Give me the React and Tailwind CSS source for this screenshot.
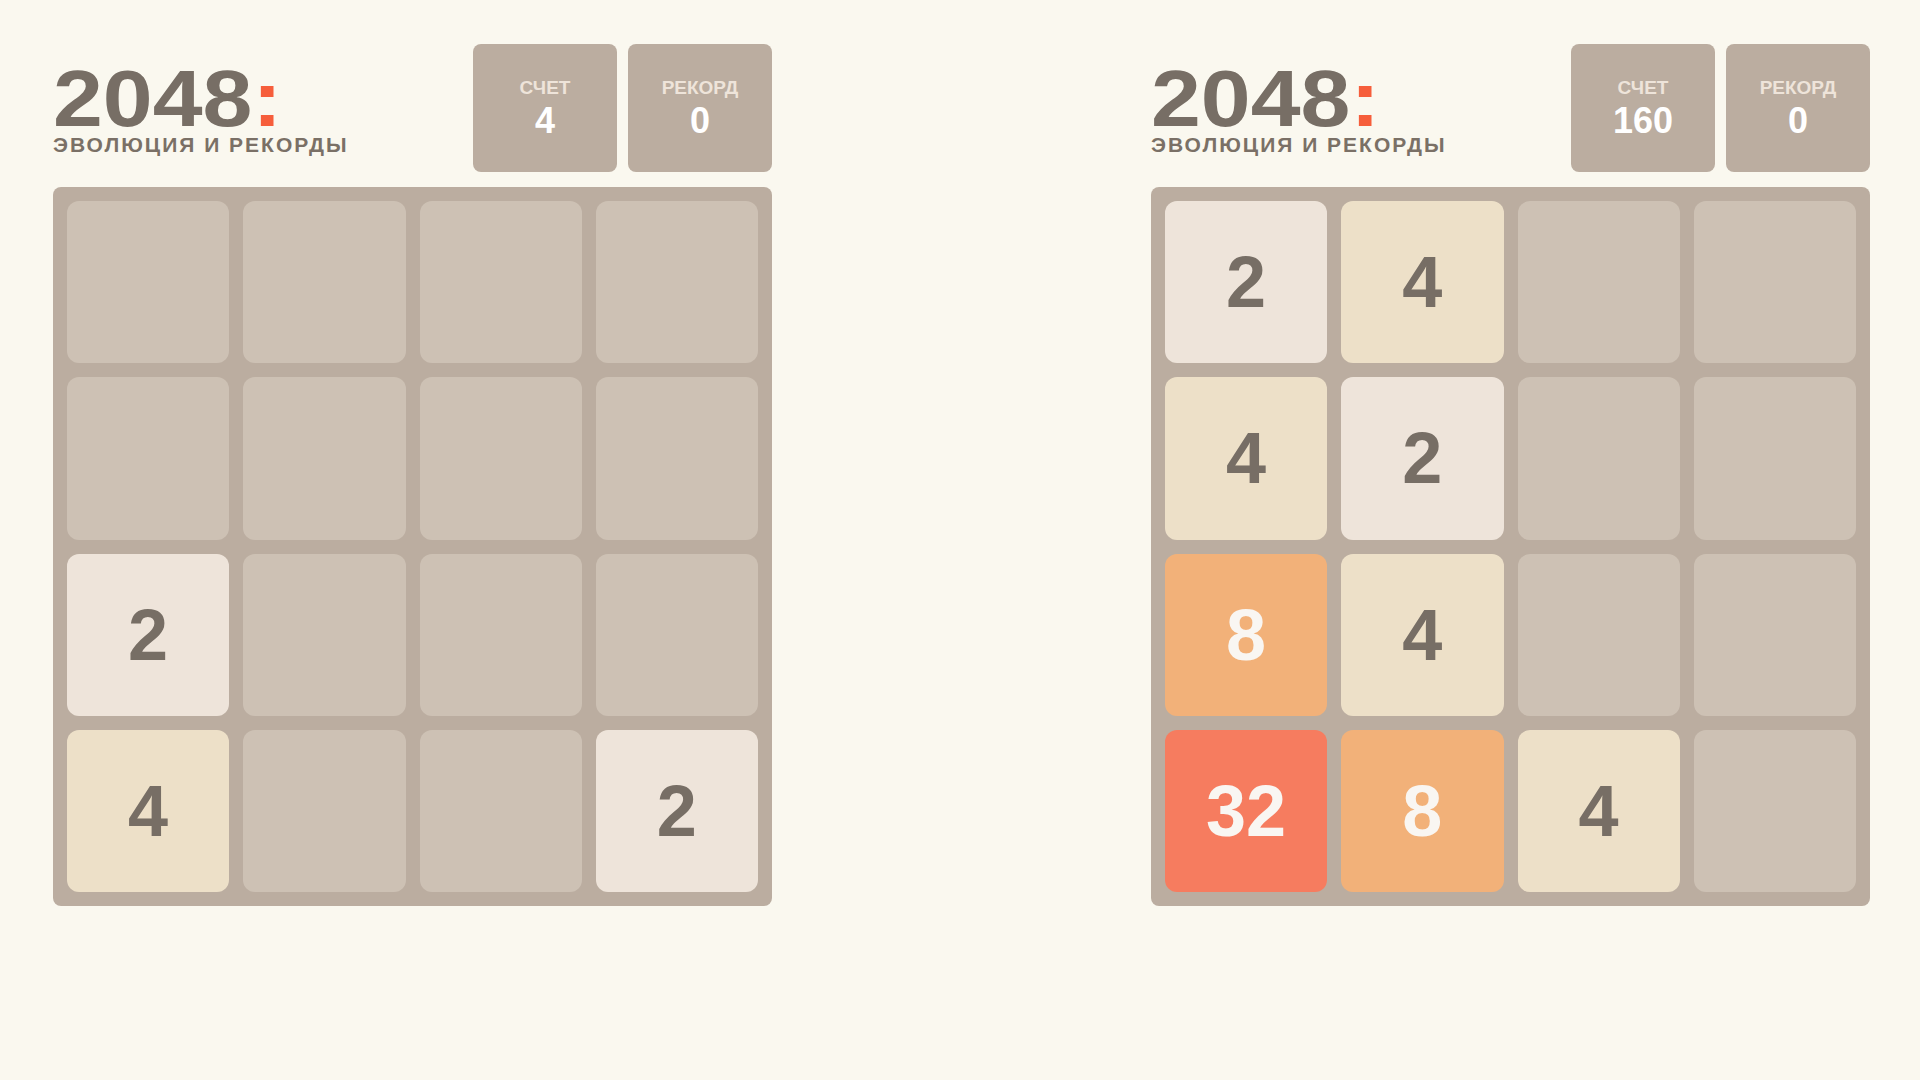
import React from "react";

const tileStyles = {
  0: "bg-[#cdc1b4]",
  2: "bg-[#eee4da] text-[#776e65]",
  4: "bg-[#ede0c8] text-[#776e65]",
  8: "bg-[#f2b179] text-[#f9f6f2]",
  16: "bg-[#f59563] text-[#f9f6f2]",
  32: "bg-[#f67c5f] text-[#f9f6f2]",
};

const games = [
  {
    score: 4,
    best: 0,
    grid: [
      [0, 0, 0, 0],
      [0, 0, 0, 0],
      [2, 0, 0, 0],
      [4, 0, 0, 2],
    ],
  },
  {
    score: 160,
    best: 0,
    grid: [
      [2, 4, 0, 0],
      [4, 2, 0, 0],
      [8, 4, 0, 0],
      [32, 8, 4, 0],
    ],
  },
];

function ScoreBox({ label, value }) {
  return (
    <div className="w-[144px] h-[128px] rounded-[8px] bg-[#bbada0] flex flex-col items-center pt-[34px]">
      <div className="text-[19px] leading-none font-bold text-[#eee4da]">
        {label}
      </div>
      <div className="mt-[6px] text-[36px] leading-none font-bold text-white">
        {value}
      </div>
    </div>
  );
}

function Game({ game }) {
  return (
    <div className="w-[719px]">
      <div className="flex justify-between items-start h-[128px]">
        <div className="pt-[20px]">
          <h1 className="origin-left scale-x-[1.12] font-bold text-[80px] leading-[70px] text-[#776e65]">
            2048<span className="text-[#f65e3b]">:</span>
          </h1>
          <div className="text-[21px] leading-none font-bold tracking-[2px] text-[#7a7066]">
            ЭВОЛЮЦИЯ И РЕКОРДЫ
          </div>
        </div>
        <div className="flex gap-[11px]">
          <ScoreBox label="СЧЕТ" value={game.score} />
          <ScoreBox label="РЕКОРД" value={game.best} />
        </div>
      </div>
      <div className="mt-[15px] w-[719px] h-[719px] rounded-[8px] bg-[#bbada0] p-[14px] grid grid-cols-4 grid-rows-4 gap-[14px]">
        {game.grid.flat().map((v, i) => (
          <div
            key={i}
            className={`rounded-[12px] flex items-center justify-center text-[72px] leading-none font-bold ${tileStyles[v]}`}
          >
            {v > 0 ? v : ""}
          </div>
        ))}
      </div>
    </div>
  );
}

export default function App() {
  return (
    <div className="min-h-screen bg-[#faf8ef] font-['Liberation_Sans',Arial,sans-serif]">
      <div className="flex justify-between pl-[53px] pr-[50px] pt-[44px]">
        {games.map((g, i) => (
          <Game key={i} game={g} />
        ))}
      </div>
    </div>
  );
}
